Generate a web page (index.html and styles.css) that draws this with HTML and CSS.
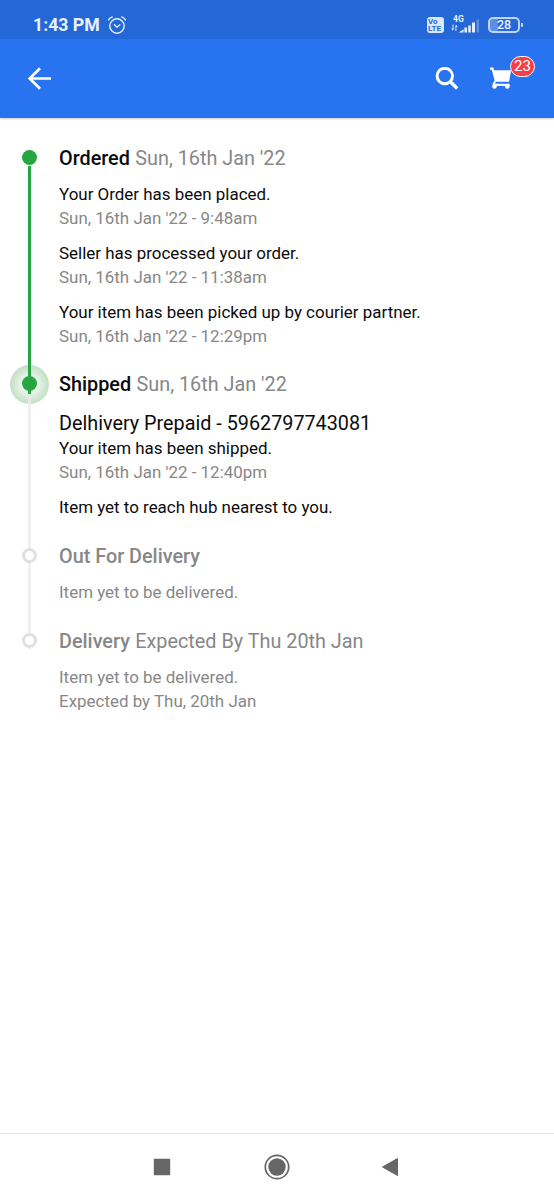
FILE: index.html
```html
<!DOCTYPE html>
<html lang="en">
<head>
<meta charset="utf-8">
<title>Order tracking</title>
<link rel="stylesheet" href="styles.css">
</head>
<body>
<div class="screen">
  <div class="status">
    <span class="clock">1:43 PM</span>
    <svg class="alarm" width="20" height="20" viewBox="0 0 20 20" fill="none" stroke="#e3edfc" stroke-width="1.4" stroke-linecap="round" stroke-linejoin="round"><circle cx="10" cy="11" r="7.2"/><path d="M1.6 4.9Q2.8 2.7 5.3 1.9M18.4 4.9Q17.2 2.7 14.7 1.9M7.3 9.8l2.7 2.3 2.9-2.3"/></svg>
    <span class="volte"><span>Vo</span><span>LTE</span></span>
    <span class="signal">
      <span class="net">4G</span>
      <svg width="29" height="15" viewBox="0 0 29 15"><path d="M2 12V6.500M4.900 7.500V13" stroke="#d6e5fb" stroke-width="1" fill="none"/><path d="M.2 10.500H2V13zM4.900 6.500L6.700 9H4.900z" fill="#d6e5fb"/><path d="M7.600 14.500h5V11.200zM13.400 9.500h2.600v5h-2.600zM17.200 7.500h2.600v7h-2.600zM21 4.500h3v10h-3z" fill="#e3edfc"/><path d="M25.600 1.500h2.400v13h-2.400z" fill="#5c91e5"/></svg>
    </span>
    <span class="battery">28</span><span class="nub"></span>
  </div>
  <header class="bar">
    <svg class="back" width="24" height="24" viewBox="0 0 24 24" fill="none" stroke="#fff" stroke-width="2.700"><path d="M13 1.300L2.700 11.500l10.300 10.200M3 11.500H24"/></svg>
    <svg class="search" width="24" height="24" viewBox="0 0 24 24" fill="none" stroke="#fff"><circle cx="9.800" cy="9" r="7.700" stroke-width="2.900"/><path d="M15.200 14.500l7 7" stroke-width="3.400"/></svg>
    <div class="cart">
      <svg width="24" height="24" viewBox="0 0 24 24"><path d="M1 .6h3.200l1 2.600h16.900l-2 11.600H6.900l-1 2h14.700v2.200H3.700v-2.200l1.900-3.300L2.800 2.800H1z" fill="#fff"/><circle cx="5.500" cy="19.500" r="2.300" fill="#fff"/><circle cx="18.300" cy="19.500" r="2.300" fill="#fff"/></svg>
      <span class="badge">23</span>
    </div>
  </header>
  <main class="timeline">
    <section class="step done">
      <div class="rail"><span class="dot"></span></div>
      <div class="content">
        <h2><b>Ordered</b> <span>Sun, 16th Jan '22</span></h2>
        <div class="event"><p>Your Order has been placed.</p><p class="time">Sun, 16th Jan '22 - 9:48am</p></div>
        <div class="event"><p>Seller has processed your order.</p><p class="time">Sun, 16th Jan '22 - 11:38am</p></div>
        <div class="event"><p>Your item has been picked up by courier partner.</p><p class="time">Sun, 16th Jan '22 - 12:29pm</p></div>
      </div>
    </section>
    <section class="step current">
      <div class="rail"><span class="halo"></span><span class="dot"></span></div>
      <div class="content">
        <h2><b>Shipped</b> <span>Sun, 16th Jan '22</span></h2>
        <div class="event"><p class="courier">Delhivery Prepaid - 5962797743081</p><p>Your item has been shipped.</p><p class="time">Sun, 16th Jan '22 - 12:40pm</p></div>
        <div class="event"><p>Item yet to reach hub nearest to you.</p></div>
      </div>
    </section>
    <section class="step pending">
      <div class="rail"><span class="dot"></span></div>
      <div class="content">
        <h2><b>Out For Delivery</b></h2>
        <div class="event"><p>Item yet to be delivered.</p></div>
      </div>
    </section>
    <section class="step pending last">
      <div class="rail"><span class="dot"></span></div>
      <div class="content">
        <h2><b>Delivery</b> <span>Expected By Thu 20th Jan</span></h2>
        <div class="event"><p>Item yet to be delivered.</p><p>Expected by Thu, 20th Jan</p></div>
      </div>
    </section>
  </main>
  <nav class="nav">
    <svg width="18" height="18" viewBox="0 0 18 18"><rect x=".8" y=".8" width="16.400" height="16.400" rx=".8" fill="#666"/></svg>
    <svg width="26" height="26" viewBox="0 0 26 26"><circle cx="13" cy="13" r="11.700" fill="none" stroke="#666" stroke-width="1.700"/><circle cx="13" cy="13" r="8.700" fill="#666"/></svg>
    <svg width="18" height="20" viewBox="0 0 18 20"><path d="M1.500 10L16.500 1.500v17z" fill="#666" stroke="#666" stroke-width="1" stroke-linejoin="round"/></svg>
  </nav>
</div>
</body>
</html>
```
FILE: styles.css
```css
* { box-sizing: border-box; }
body { margin: 0; background: #fff; font-family: Roboto, sans-serif; color: #0b0b0b; }
svg { display: block; flex: none; }
h2, p { margin: 0; white-space: nowrap; }
.screen { width: 554px; height: 1200px; display: flex; flex-direction: column; }

.status { height: 39px; flex: none; background: #2468d8; display: flex; align-items: center; padding: 10px 31px 0 33px; color: #e9f1fd; }
.clock { font-size: 17.700px; font-weight: 700; line-height: 20px; width: 67px; white-space: nowrap; }
.alarm { margin-left: 7px; }
.volte { margin-left: auto; width: 17px; height: 16px; border-radius: 3px; background: #dbe8fc; color: #2468d8; font-size: 8px; line-height: 7px; font-weight: 700; padding: 1px; display: flex; flex-direction: column; }
.signal { margin-left: 7px; width: 30px; height: 18px; }
.net { display: block; font-size: 8.500px; font-weight: 700; line-height: 7px; padding-left: 2px; }
.signal svg { margin-top: -5px; }
.battery { margin-left: 7px; width: 32px; height: 16px; border: 2px solid #bed5f8; border-radius: 5px; background: linear-gradient(90deg, #5b8fe3 0 8px, transparent 8px); background-origin: content-box; font-size: 12.500px; font-weight: 500; line-height: 12.500px; text-align: center; }
.nub { width: 2px; height: 4px; margin-left: 1px; background: #bed5f8; border-radius: 0 1px 1px 0; }

.bar { height: 79px; flex: none; background: #2874f0; box-shadow: 0 1px 2px #0003; display: flex; align-items: center; padding: 0 41px 0 27px; }
.search { margin-left: auto; }
.cart { position: relative; margin-left: 30px; }
.badge { position: absolute; left: 21px; top: -11px; width: 25px; height: 21px; border: 1.500px solid #fff; border-radius: 11px; background: #f43f46; color: #fff; font-size: 15px; line-height: 19px; text-align: center; }

.timeline { flex: 1; padding-top: 28px; }
.step { display: grid; grid-template-columns: 59px 1fr; }
.content { padding-bottom: 23.800px; }
h2 { font-size: 19.820px; line-height: 25.400px; font-weight: 400; color: #878787; margin-bottom: 11.800px; }
h2 span { margin-left: .5px; }
h2 b { font-weight: 500; color: #0b0b0b; }
.event { font-size: 16.940px; line-height: 23.600px; }
.event + .event { margin-top: 11.700px; }
.time { color: #878787; }
.courier { font-size: 19.800px; line-height: 26px; padding-top: 1.200px; margin-bottom: .1px; }
.pending, .pending h2 b { color: #878787; }
.pending .content { padding-bottom: 24.200px; }
.current h2 { margin-bottom: 12.500px; }
.current .content { padding-bottom: 24.200px; }

.rail { position: relative; }
.rail::before { content: ""; position: absolute; left: 28px; top: 12px; bottom: -12px; width: 3px; background: #f0f0f0; }
.dot { position: absolute; z-index: 2; left: 22px; top: 4px; width: 15px; height: 15px; border-radius: 50%; background: #26a541; }
.done .rail::before { top: 20px; background: #26a541; z-index: 1; }
.current .rail::before { z-index: 1; background: linear-gradient(#26a541 10px, #e4ece5 10px 20px, #f0f0f0 20px); }
.halo { position: absolute; left: 10px; top: -7px; width: 39px; height: 39px; border-radius: 50%; background: radial-gradient(closest-side, #edf6ee 38%, #d3e8d5 75%, #c3e0c6 100%); }
.pending .dot { background: #fff; border: 3px solid #e0e0e0; }
.last .rail::before { bottom: auto; height: 8px; }

.nav { height: 67px; flex: none; border-top: 1px solid #e8e8e8; display: flex; align-items: center; justify-content: space-between; padding: 0 155px 0 153px; }
.nav svg:nth-child(2) { margin-left: 1.500px; }
```
